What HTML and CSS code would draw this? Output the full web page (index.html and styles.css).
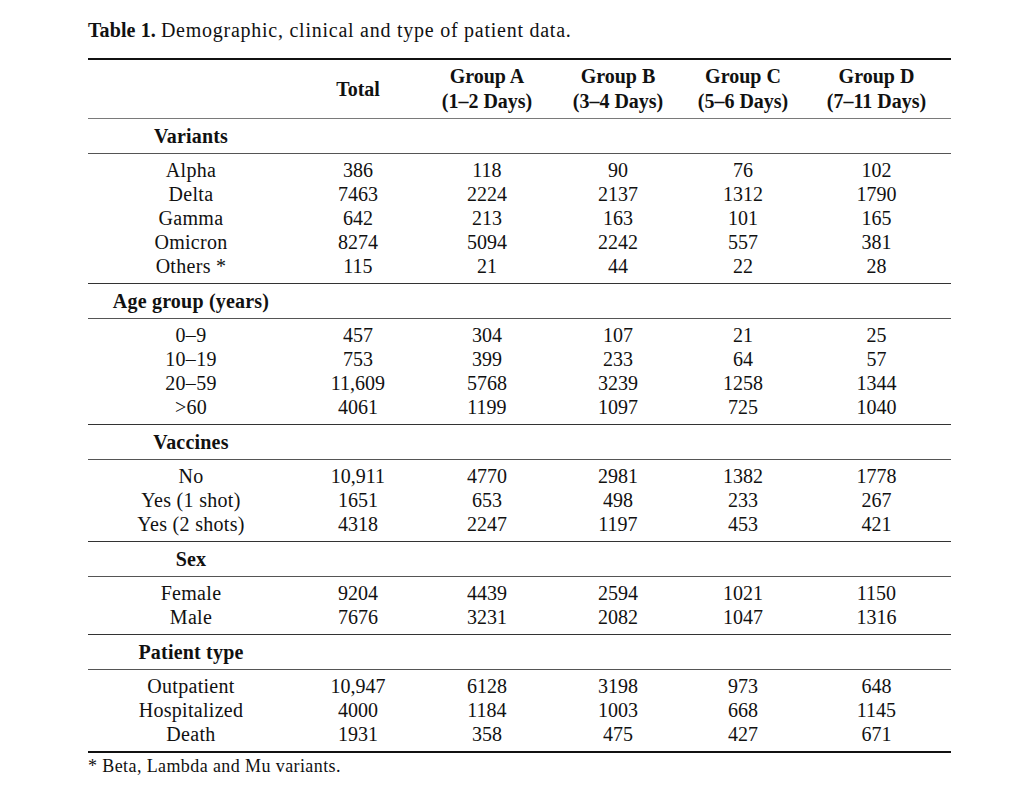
FILE: index.html
```html
<!DOCTYPE html>
<html lang="en">
<head>
<meta charset="utf-8">
<title>Table 1</title>
<link rel="stylesheet" href="styles.css">
</head>
<body>
<div class="page">
  <p class="caption"><b class="caption-label">Table 1.</b> <span class="caption-text">Demographic, clinical and type of patient data.</span></p>
  <table class="data">
    <colgroup>
      <col class="c-label"><col class="c-total"><col class="c-a"><col class="c-b"><col class="c-c"><col class="c-d">
    </colgroup>
    <thead>
      <tr><th></th><th>Total</th><th>Group A<br>(1–2 Days)</th><th>Group B<br>(3–4 Days)</th><th>Group C<br>(5–6 Days)</th><th>Group D<br>(7–11 Days)</th></tr>
    </thead>
    <tbody class="sec"><tr><th>Variants</th><td colspan="5"></td></tr></tbody>
    <tbody class="grp">
      <tr><td>Alpha</td><td>386</td><td>118</td><td>90</td><td>76</td><td>102</td></tr>
      <tr><td>Delta</td><td>7463</td><td>2224</td><td>2137</td><td>1312</td><td>1790</td></tr>
      <tr><td>Gamma</td><td>642</td><td>213</td><td>163</td><td>101</td><td>165</td></tr>
      <tr><td>Omicron</td><td>8274</td><td>5094</td><td>2242</td><td>557</td><td>381</td></tr>
      <tr><td>Others *</td><td>115</td><td>21</td><td>44</td><td>22</td><td>28</td></tr>
    </tbody>
    <tbody class="sec"><tr><th>Age group (years)</th><td colspan="5"></td></tr></tbody>
    <tbody class="grp">
      <tr><td>0–9</td><td>457</td><td>304</td><td>107</td><td>21</td><td>25</td></tr>
      <tr><td>10–19</td><td>753</td><td>399</td><td>233</td><td>64</td><td>57</td></tr>
      <tr><td>20–59</td><td>11,609</td><td>5768</td><td>3239</td><td>1258</td><td>1344</td></tr>
      <tr><td>&gt;60</td><td>4061</td><td>1199</td><td>1097</td><td>725</td><td>1040</td></tr>
    </tbody>
    <tbody class="sec"><tr><th>Vaccines</th><td colspan="5"></td></tr></tbody>
    <tbody class="grp">
      <tr><td>No</td><td>10,911</td><td>4770</td><td>2981</td><td>1382</td><td>1778</td></tr>
      <tr><td>Yes (1 shot)</td><td>1651</td><td>653</td><td>498</td><td>233</td><td>267</td></tr>
      <tr><td>Yes (2 shots)</td><td>4318</td><td>2247</td><td>1197</td><td>453</td><td>421</td></tr>
    </tbody>
    <tbody class="sec"><tr><th>Sex</th><td colspan="5"></td></tr></tbody>
    <tbody class="grp">
      <tr><td>Female</td><td>9204</td><td>4439</td><td>2594</td><td>1021</td><td>1150</td></tr>
      <tr><td>Male</td><td>7676</td><td>3231</td><td>2082</td><td>1047</td><td>1316</td></tr>
    </tbody>
    <tbody class="sec"><tr><th>Patient type</th><td colspan="5"></td></tr></tbody>
    <tbody class="grp last">
      <tr><td>Outpatient</td><td>10,947</td><td>6128</td><td>3198</td><td>973</td><td>648</td></tr>
      <tr><td>Hospitalized</td><td>4000</td><td>1184</td><td>1003</td><td>668</td><td>1145</td></tr>
      <tr><td>Death</td><td>1931</td><td>358</td><td>475</td><td>427</td><td>671</td></tr>
    </tbody>
  </table>
  <p class="note">* Beta, Lambda and Mu variants.</p>
</div>
</body>
</html>
```

FILE: styles.css
```css
html, body {
  margin: 0;
  padding: 0;
  background: #ffffff;
}

body {
  font-family: "Liberation Serif", "Times New Roman", serif;
  color: #111111;
}

.page {
  margin-left: 88px;
  width: 863px;
  padding-top: 18px;
}

.caption {
  margin: 0 0 16px 0;
  font-size: 20px;
  line-height: 24px;
}

.caption-label {
  letter-spacing: 0.1px;
}

.caption-text {
  letter-spacing: 0.75px;
}

.data {
  width: 863px;
  border-collapse: collapse;
  table-layout: fixed;
  font-size: 20px;
  border-top: 2px solid #111111;
  border-bottom: 2px solid #111111;
}

.c-label { width: 206px; }
.c-total { width: 128px; }
.c-a { width: 130px; }
.c-b { width: 132px; }
.c-c { width: 118px; }
.c-d { width: 149px; }

.data th,
.data td {
  padding: 0;
  text-align: center;
  vertical-align: middle;
  line-height: 24px;
}

.data tbody td:first-child {
  letter-spacing: 0.3px;
}

.data thead th {
  font-weight: bold;
  line-height: 25px;
  padding-top: 4px;
  padding-bottom: 4px;
}

.data thead {
  border-bottom: 1px solid #7a7a7a;
}

.sec th {
  font-weight: bold;
  letter-spacing: 0.2px;
  padding-top: 5px;
  padding-bottom: 5px;
}

.sec td {
  padding-top: 5px;
  padding-bottom: 5px;
}

.sec {
  border-bottom: 1px solid #555555;
}

.grp {
  border-bottom: 1px solid #333333;
}

.grp.last {
  border-bottom: none;
}

.grp tr:first-child td {
  padding-top: 4px;
}

.grp tr:last-child td {
  padding-bottom: 5px;
}

.note {
  margin: 0;
  padding-top: 3px;
  font-size: 18px;
  line-height: 20px;
  letter-spacing: 0.4px;
}
```
